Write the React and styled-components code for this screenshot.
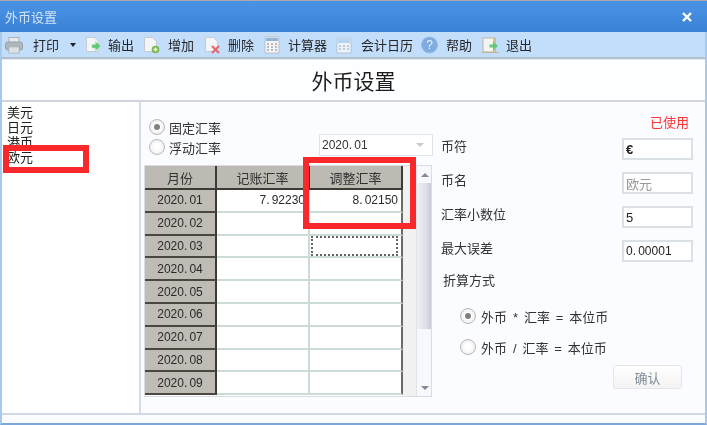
import React from "react";
import styled, { createGlobalStyle } from "styled-components";

const Global = createGlobalStyle`
  html, body { margin: 0; padding: 0; background: #fff; }
  #root { width: 707px; height: 425px; overflow: hidden; }
  * { box-sizing: border-box; }
`;
const Win = styled.div`
  position: relative; width: 707px; height: 425px; overflow: hidden;
  display: flex; flex-direction: column;
  background: #fbfcff; color: #222;
  font-family: "Liberation Sans", "Noto Sans CJK SC", sans-serif; font-size: 13px;
  border-top: 1px solid #a9a9a9;
  filter: blur(0.5px);
`;
const TitleBar = styled.div`
  height: 31px; flex: none; display: flex; align-items: center; justify-content: space-between;
  padding: 0 14px 0 5px;
  background: linear-gradient(#4a93e4, #3b82d6);
  color: #d3e4f8; font-size: 13px;
`;
const Close = styled.span`display: flex; width: 12px; height: 12px;`;
const Body = styled.div`
  flex: 1; min-height: 0; display: flex; flex-direction: column;
  border-left: 2px solid #a8c9ee; border-right: 2px solid #a8c9ee; border-bottom: 2px solid #7ba7dc;
`;
const Toolbar = styled.div`
  height: 27px; flex: none; display: flex; align-items: center; padding-left: 3px;
  background: #c3defb; border-bottom: 2px solid #b4bfcb; color: #262626;
`;
const Tool = styled.div`
  display: flex; align-items: center; flex: none;
  margin-left: ${p => p.$ml}px; gap: ${p => p.$gap}px;
  svg { display: block; flex: none; }
`;
const Caret = styled.span`
  width: 0; height: 0; flex: none; margin-left: 11px;
  border-left: 3.5px solid transparent; border-right: 3.5px solid transparent; border-top: 4px solid #222;
`;
const Heading = styled.div`
  height: 43px; flex: none; display: flex; align-items: center; justify-content: center;
  font-size: 21px; color: #1c1c1c; padding: 1px 0 2px 0; border-top: 1px solid #e3eefb;
  border-bottom: 2px solid #cfd6e0; background: #fdfeff;
`;
const Main = styled.div`
  height: 313px; flex: none; display: flex; align-items: stretch;
  border-bottom: 2px solid #d2d9e6;
`;
const Footer = styled.div`flex: 1; background: #fbfcff;`;
const List = styled.div`
  width: 139px; flex: none; background: #fff; padding: 3px 0 0 5px;
  border-right: 2px solid #d6dde6;
  display: flex; flex-direction: column;
`;
const ListItem = styled.div`height: 15px; line-height: 15px; font-size: 13px; color: #222;`;
const Center = styled.div`
  width: 295px; flex: none; padding: 16px 0 0 3px; display: flex; flex-direction: column;
`;
const TopRow = styled.div`display: flex; height: 47px; align-items: flex-start;`;
const Radios = styled.div`width: 175px; flex: none; display: flex; flex-direction: column; padding-left: 5px; gap: 2px;`;
const RadioRow = styled.div`
  display: flex; align-items: center; gap: ${p => p.$gap || 4}px; height: 18px; font-size: 13px; color: #333;
  white-space: pre; word-spacing: ${p => p.$ws || 0}px;
`;
const RadioMark = styled.span`
  width: 16px; height: 16px; flex: none; border-radius: 50%; border: 1px solid #b9b9b9;
  background: radial-gradient(circle, #fff 30%, #e4e4e4 100%);
  display: flex; align-items: center; justify-content: center;
  &::after { content: ""; width: 6px; height: 6px; border-radius: 50%; background: ${p => p.$on ? "#808080" : "transparent"}; }
`;
const Num = styled.span`font: 12px "Liberation Sans", sans-serif; white-space: nowrap;`;
const NumDot = styled.span`display: inline-block; width: 5.5px;`;
const Select = styled.div`
  margin-top: 16px; width: 114px; height: 22px; border: 1px solid #dfe3e8; background: #fff;
  display: flex; align-items: center; justify-content: space-between; padding: 0 8px 0 2px; color: #333;
  &::after { content: ""; border-left: 4px solid transparent; border-right: 4px solid transparent; border-top: 4px solid #c8ccd2; }
`;
const GridFrame = styled.div`
  width: 288px; height: 232px; display: flex; background: #f1f1f1; overflow: hidden;
  border: 1px solid #d8dde5;
`;
const Table = styled.div`
  width: 258px; flex: none; display: grid;
  grid-template-columns: 72px 93px 93px; grid-template-rows: 24px repeat(9, 22.8px);
  align-content: start; background: #fff;
`;
const Head = styled.div`
  background: #bdb9b3; border-right: 2px solid #3d3a36; border-bottom: 2px solid #3d3a36;
  display: flex; align-items: center; justify-content: center; font-size: 13px; color: #333;
`;
const MonthCell = styled.div`
  background: #bfbbb5; border-right: 2px solid #3d3a36; border-bottom: 2px solid #4a4743;
  display: flex; align-items: center; justify-content: center; color: #2a2a2a;
`;
const Cell = styled.div`
  background: #fff; border-right: 2px solid ${p => p.$last ? "#6b6b68" : "#cbdcd5"}; border-bottom: 2px solid #cbdcd5;
  display: flex; align-items: center; justify-content: flex-end; padding: 0 3px 0 0;
  color: #2a2a2a; overflow: hidden;
`;
const Focus = styled.div`width: 100%; height: 100%; border: 2px dotted #666; margin: 0 0 0 1px;`;
const Scroll = styled.div`
  margin-left: 13px; width: 16px; flex: none; background: #f6f8fb; border-left: 1px solid #e1e4e9;
  display: flex; flex-direction: column;
`;
const ScrollBtn = styled.div`
  height: 17px; flex: none; display: flex; align-items: center; justify-content: center; background: #f6f8fb;
  &::after { content: ""; border-left: 4px solid transparent; border-right: 4px solid transparent;
    ${p => p.$up ? "border-bottom: 4px solid #7f8a9c;" : "border-top: 4px solid #7f8a9c;"} }
`;
const Thumb = styled.div`height: 146px; flex: none; background: linear-gradient(90deg, #f0f0f5, #dedee6 60%, #c6c6d2);`;
const Track = styled.div`flex: 1;`;
const Right = styled.div`flex: 1; padding: 13px 12px 0 5px; display: flex; flex-direction: column;`;
const Used = styled.div`text-align: right; color: #f33; font-size: 13px; padding-right: 4px; height: 23px; line-height: 15px; flex: none;`;
const FormRow = styled.div`display: flex; justify-content: space-between; align-items: center; height: 22px; flex: none; margin-bottom: ${p => p.$mb ?? 12}px; font-size: 13px; color: #333;`;
const FormLabel = styled.span`padding-bottom: 8px;`;
const Field = styled.div`
  width: 71px; height: 22px; border: 2px solid #dbe0e7; background: #fff; display: flex; align-items: center; padding-left: 2px;
  color: ${p => p.$off ? "#999" : "#222"}; font-weight: ${p => p.$bold ? 700 : 400};
`;
const Section = styled.div`margin: 10px 0 0 2px; height: 18px; line-height: 18px; color: #333; flex: none;`;
const ModeList = styled.div`display: flex; flex-direction: column; gap: 13px; padding: 17px 0 0 19px; flex: none;`;
const Confirm = styled.div`
  width: 69px; height: 24px; align-self: flex-end; margin: 9px 11px 0 0; border: 1px solid #e6e6e6; border-radius: 3px; flex: none;
  background: linear-gradient(#fff, #f3f3f3); color: #7f8c98; display: flex; align-items: center; justify-content: center;
`;
const RedBox = styled.div`
  position: absolute; border: 6px solid #f9282b; pointer-events: none;
  left: ${p => p.$x}px; top: ${p => p.$y}px; width: ${p => p.$w}px; height: ${p => p.$h}px;
`;

const Printer = () => (<svg width="18" height="18" viewBox="0 0 18 18">
  <rect x="4" y="1.500" width="10" height="6" fill="#e6e9ee" stroke="#a9b1ba"/>
  <rect x="0.5" y="6" width="17" height="8" rx="2" fill="#aeb6be" stroke="#98a1aa"/>
  <rect x="4" y="11" width="10" height="6" fill="#f2f4f6" stroke="#a9b1ba"/>
  <path d="M5.5 13h7M5.500 15h7" stroke="#c4c9cf"/></svg>);
const Doc = () => (<path d="M1.500 1.500h8l4 4v10h-12z" fill="#f4f5f7" stroke="#c6cbd0"/>);
const Export = () => (<svg width="16" height="18" viewBox="0 0 16 18"><Doc/>
  <path d="M10.500 5.500v3H7v3.500h3.500v3l5-5z" fill="#62c878" stroke="#a6e0b3" strokeWidth=".5"/></svg>);
const Add = () => (<svg width="17" height="18" viewBox="0 0 17 18"><Doc/>
  <circle cx="12.500" cy="13.500" r="3.800" fill="#78b64c"/><path d="M10.500 13.500h4M12.500 11.500v4" stroke="#fff" strokeWidth="1.400"/></svg>);
const Del = () => (<svg width="16" height="18" viewBox="0 0 16 18"><Doc/>
  <path d="M8 10l7 7M15 10l-7 7" stroke="#e46a6b" strokeWidth="2.200"/></svg>);
const Calc = () => (<svg width="16" height="18" viewBox="0 0 16 18">
  <rect x="1" y="1" width="14" height="16" fill="#f4f5f6" stroke="#b9bfc6"/><rect x="2" y="2" width="12" height="3" fill="#92b5d8"/>
  <path d="M3 8h2M7 8h2M11 8h2M3 11h2M7 11h2M11 11h2M3 14h2M7 14h2M11 14h2" stroke="#a0a7b0" strokeWidth="1.500"/></svg>);
const Cal = () => (<svg width="16" height="18" viewBox="0 0 16 18">
  <rect x="1" y="2" width="14" height="15" fill="#eef3f8" stroke="#b3c6da"/><rect x="2" y="3" width="12" height="4" fill="#b4d4f3"/>
  <path d="M3 10h2M7 10h2M11 10h2M3 13h2M7 13h2M11 13h2" stroke="#a9bfd6" strokeWidth="1.500"/></svg>);
const Help = () => (<svg width="17" height="18" viewBox="0 0 17 18">
  <circle cx="8.500" cy="9" r="8" fill="#7fabde" stroke="#98bde6"/>
  <text x="8.500" y="13" textAnchor="middle" fontSize="12" fontFamily="Liberation Sans" fill="#e8f2fc">?</text></svg>);
const Exit = () => (<svg width="17" height="18" viewBox="0 0 17 18">
  <rect x="1" y="2" width="11" height="14" fill="#f4f4f0" stroke="#bdb49c"/>
  <path d="M11 2l3-1v16l-3-1z" fill="#cfbf9b"/><path d="M0 16.500h17" stroke="#bdb49c"/>
  <path d="M11 5.500v3H7.500v3H11v3l5-4.500z" fill="#62c878"/></svg>);

const tools = [
  { Icon: Printer, label: "打印", ml: 0, gap: 10, caret: true },
  { Icon: Export, label: "输出", ml: 9, gap: 7 },
  { Icon: Add, label: "增加", ml: 9, gap: 8 },
  { Icon: Del, label: "删除", ml: 10, gap: 8 },
  { Icon: Calc, label: "计算器", ml: 10, gap: 8 },
  { Icon: Cal, label: "会计日历", ml: 9, gap: 9 },
  { Icon: Help, label: "帮助", ml: 8, gap: 8 },
  { Icon: Exit, label: "退出", ml: 10, gap: 7 },
];
const months = ["01","02","03","04","05","06","07","08","09"].map(m => "2020." + m);

const Number = ({ v }) => {
  const [a, b] = v.split(".");
  return <Num>{a}<NumDot>.</NumDot>{b}</Num>;
};

export default function App() {
  return (
    <Win>
      <Global />
      <TitleBar>
        <span>外币设置</span>
        <Close><svg width="12" height="12" viewBox="0 0 12 12"><path d="M2 2l8 8M10 2l-8 8" stroke="#fff" strokeWidth="2.400"/></svg></Close>
      </TitleBar>
      <Body>
        <Toolbar>
          {tools.map(({ Icon, label, ml, gap, caret }) => (
            <React.Fragment key={label}>
              <Tool $ml={ml} $gap={gap}><Icon /><span>{label}</span></Tool>
              {caret && <Caret />}
            </React.Fragment>
          ))}
        </Toolbar>
        <Heading>外币设置</Heading>
        <Main>
          <List>
            {["美元", "日元", "港币", "欧元"].map(t => <ListItem key={t}>{t}</ListItem>)}
          </List>
          <Center>
            <TopRow>
              <Radios>
                <RadioRow><RadioMark $on />固定汇率</RadioRow>
                <RadioRow><RadioMark />浮动汇率</RadioRow>
              </Radios>
              <Select><Number v="2020.01" /></Select>
            </TopRow>
            <GridFrame>
              <Table>
                <Head>月份</Head><Head>记账汇率</Head><Head>调整汇率</Head>
                {months.map((m, i) => (
                  <React.Fragment key={m}>
                    <MonthCell><Number v={m} /></MonthCell>
                    <Cell>{i === 0 ? <Number v="7.92230" /> : ""}</Cell>
                    <Cell $last>{i === 0 ? <Number v="8.02150" /> : i === 2 ? <Focus /> : ""}</Cell>
                  </React.Fragment>
                ))}
              </Table>
              <Scroll>
                <ScrollBtn $up /><Thumb /><Track /><ScrollBtn />
              </Scroll>
            </GridFrame>
          </Center>
          <Right>
            <Used>已使用</Used>
            <FormRow><FormLabel>币符</FormLabel><Field $bold>€</Field></FormRow>
            <FormRow><FormLabel>币名</FormLabel><Field $off>欧元</Field></FormRow>
            <FormRow><FormLabel>汇率小数位</FormLabel><Field>5</Field></FormRow>
            <FormRow $mb={0}><FormLabel>最大误差</FormLabel><Field><Number v="0.00001" /></Field></FormRow>
            <Section>折算方式</Section>
            <ModeList>
              <RadioRow $ws={2.3} $gap={5}><RadioMark $on />外币 * 汇率 = 本位币</RadioRow>
              <RadioRow $ws={2.3} $gap={5}><RadioMark />外币 / 汇率 = 本位币</RadioRow>
            </ModeList>
            <Confirm>确认</Confirm>
          </Right>
        </Main>
        <Footer />
      </Body>
      <RedBox $x={3} $y={144} $w={86} $h={28} />
      <RedBox $x={303} $y={156} $w={113} $h={72} />
    </Win>
  );
}
